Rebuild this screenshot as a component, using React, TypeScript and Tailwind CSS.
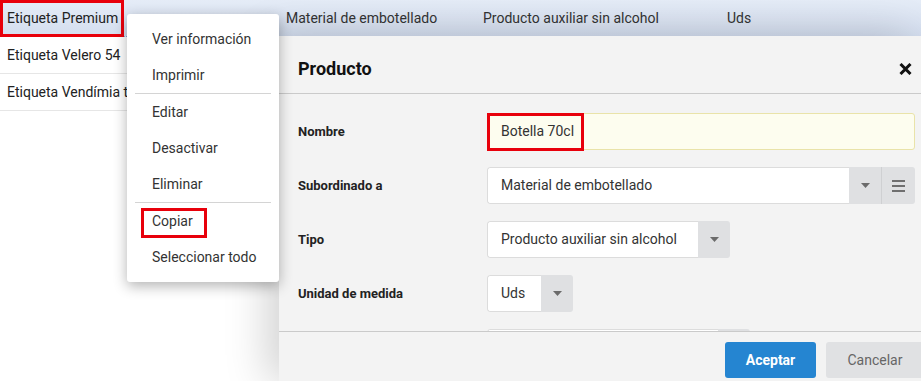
import React from 'react';

const menuGroups = [
  ['Ver información', 'Imprimir'],
  ['Editar', 'Desactivar', 'Eliminar'],
  ['Copiar', 'Seleccionar todo'],
];

function Caret() {
  return (
    <svg width="9" height="5" viewBox="0 0 9 5" className="block">
      <path d="M0 0h9L4.5 5z" fill="#6b6b6b" />
    </svg>
  );
}

function SelectBox({ value, width, textWidth, withMenu }: { value: string; width: string; textWidth: string; withMenu?: boolean }) {
  return (
    <div className={`flex h-[37px] ${width} rounded-[3px] overflow-hidden`}>
      <div className={`${textWidth} bg-white border border-r-0 border-[#dcdcdc] rounded-l-[3px] flex items-center pl-[13px] text-[14px] text-[#333] whitespace-nowrap overflow-hidden`}>
        {value}
      </div>
      <div className="w-[32px] bg-[#dfe0e2] flex items-center justify-center">
        <Caret />
      </div>
      {withMenu && (
        <div className="flex-1 bg-[#dfe0e2] border-l border-[#cfd0d2] flex flex-col items-center justify-center gap-[3px]">
          <span className="block w-[13px] h-[2px] bg-[#6f6f6f]" />
          <span className="block w-[13px] h-[2px] bg-[#6f6f6f]" />
          <span className="block w-[13px] h-[2px] bg-[#6f6f6f]" />
        </div>
      )}
    </div>
  );
}

function FormRow({ label, children }: { label: string; children: React.ReactNode }) {
  return (
    <div className="flex items-center h-[37px] shrink-0">
      <div className="w-[189px] shrink-0 text-[13px] font-bold text-[#222]">{label}</div>
      {children}
    </div>
  );
}

export default function App() {
  return (
    <div className="relative w-[921px] h-[381px] overflow-hidden bg-white font-['Roboto',sans-serif]">
      {/* list behind the dialog */}
      <div className="flex flex-col">
        <div className="flex h-[37px] items-center bg-gradient-to-b from-[#e5ecf7] to-[#d4deef] border-b border-dotted border-[#8fa8d8] text-[14px] text-[#222]">
          <div className="relative w-[279px] h-full flex items-center pl-[7px]">
            Etiqueta Premium
            <div className="absolute left-0 top-0 w-[124px] h-[37px] border-[3px] border-[#e8000b]" />
          </div>
          <div className="w-[197px] pl-[7px] text-[#333]">Material de embotellado</div>
          <div className="w-[244px] pl-[7px] text-[#333]">Producto auxiliar sin alcohol</div>
          <div className="pl-[7px] text-[#333]">Uds</div>
        </div>
        <div className="h-[37px] flex items-center pl-[7px] border-b border-[#e6e6e6] text-[14px] text-[#222]">Etiqueta Velero 54</div>
        <div className="h-[37px] flex items-center pl-[7px] border-b border-[#e6e6e6] text-[14px] text-[#222] w-[278px]">Etiqueta Vendímia tinto</div>
      </div>

      {/* dialog */}
      <div className="absolute left-[279px] top-[36px] right-0 bottom-0 bg-[#f3f3f3] flex flex-col shadow-[-12px_0_40px_rgba(0,0,0,0.18)]">
        <div className="h-[58px] shrink-0 flex items-center justify-between pt-[8px] pl-[19px] pr-[9px] border-b border-[#cacaca]">
          <span className="text-[18px] font-bold text-[#111]">Producto</span>
          <svg width="13" height="12" viewBox="0 0 13 12">
            <path d="M1.5 1l10 10M11.5 1l-10 10" stroke="#111" strokeWidth="3" />
          </svg>
        </div>

        <div className="flex-1 overflow-hidden flex flex-col gap-[17px] pt-[19px] pl-[19px] pr-[6px]">
          <FormRow label="Nombre">
            <div className="relative flex-1 h-[37px] bg-[#fdfdef] border border-[#e9e3a9] rounded-[3px] flex items-center pl-[13px] text-[14px] text-[#333]">
              Botella 70cl
              <div className="absolute -left-px -top-px w-[97px] h-[38px] border-[3px] border-[#e8000b]" />
            </div>
          </FormRow>
          <FormRow label="Subordinado a">
            <SelectBox value="Material de embotellado" width="w-[428px]" textWidth="w-[362px]" withMenu />
          </FormRow>
          <FormRow label="Tipo">
            <SelectBox value="Producto auxiliar sin alcohol" width="w-[243px]" textWidth="w-[211px]" />
          </FormRow>
          <FormRow label="Unidad de medida">
            <SelectBox value="Uds" width="w-[86px]" textWidth="w-[54px]" />
          </FormRow>
          <FormRow label="">
            <SelectBox value="" width="w-[263px]" textWidth="w-[231px]" />
          </FormRow>
        </div>

        <div className="h-[50px] shrink-0 border-t border-[#cacaca] flex items-start pt-[10px] pl-[446px] gap-[10px]">
          <div className="w-[91px] h-[36px] shrink-0 rounded-[3px] bg-[#2585d1] text-white text-[14px] font-bold flex items-center justify-center">Aceptar</div>
          <div className="w-[98px] h-[36px] shrink-0 rounded-[3px] bg-[#e0e1e3] text-[#666] text-[14px] flex items-center justify-center">Cancelar</div>
        </div>
      </div>

      {/* context menu */}
      <div className="absolute left-[127px] top-[14px] w-[152px] bg-white rounded-[3px] py-[7px] shadow-[0_4px_14px_rgba(0,0,0,0.3)]">
        {menuGroups.map((group, gi) => (
          <div key={gi} className={gi > 0 ? 'border-t border-[#d4d4d4] mx-[8px]' : 'mx-[8px]'}>
            {group.map(item => (
              <div key={item} className="relative h-[36px] flex items-center pl-[17px] text-[14px] text-[#333]">
                {item}
                {item === 'Copiar' && (
                  <div className="absolute left-[6px] top-[5px] w-[66px] h-[30px] border-[3px] border-[#e8000b]" />
                )}
              </div>
            ))}
          </div>
        ))}
      </div>
    </div>
  );
}
